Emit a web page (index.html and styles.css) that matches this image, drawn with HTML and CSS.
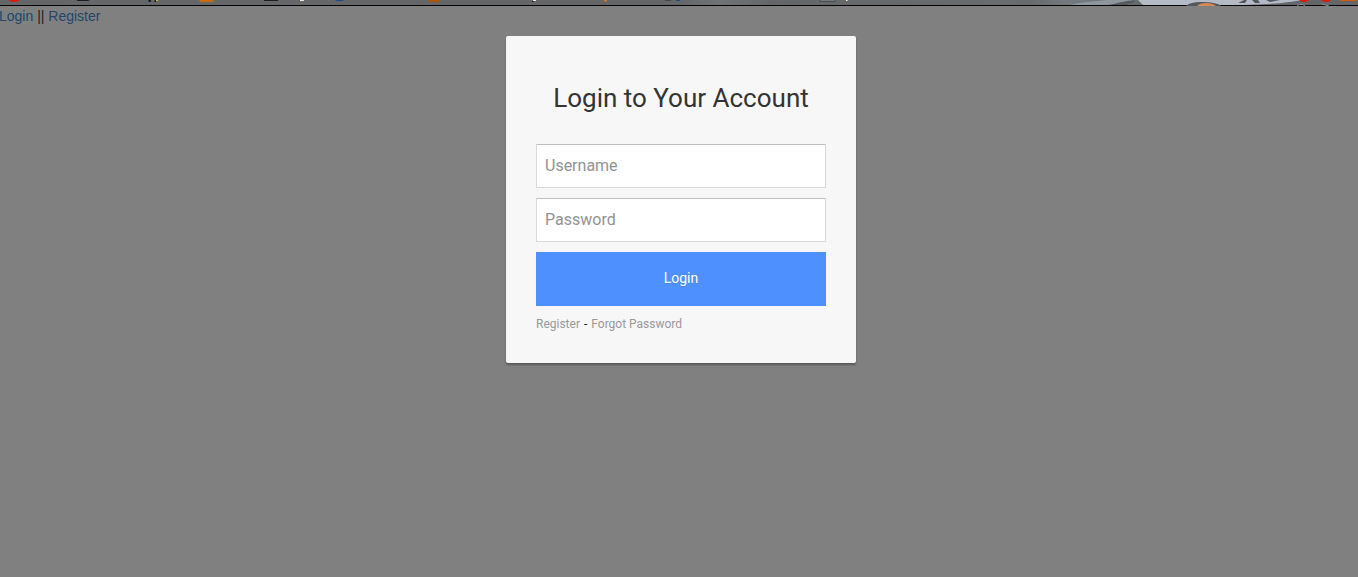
FILE: index.html
```html
<!DOCTYPE html>
<html lang="en">
<head>
<meta charset="utf-8">
<title>Login</title>
<link rel="stylesheet" href="styles.css">
</head>
<body>
<svg class="top-strip" viewBox="0 0 1358 6" preserveAspectRatio="none" aria-hidden="true">
  <defs>
    <linearGradient id="metal" x1="0" x2="1">
      <stop offset="0" stop-color="#646668"/>
      <stop offset=".5" stop-color="#646668"/>
      <stop offset=".53" stop-color="#707375"/>
      <stop offset=".57" stop-color="#646668"/>
      <stop offset=".76" stop-color="#686b6e"/>
      <stop offset=".79" stop-color="#747b80"/>
      <stop offset=".84" stop-color="#646a6c"/>
      <stop offset="1" stop-color="#646668"/>
    </linearGradient>
    <pattern id="grain" width="4" height="4" patternUnits="userSpaceOnUse">
      <path d="M0 0h1v1H0zM2 2h1v1H2z" fill="#727476"/>
    </pattern>
  </defs>
  <rect width="1358" height="6" fill="url(#metal)"/>
  <rect x="70" width="345" height="5" fill="url(#grain)" opacity=".5"/>
  <rect x="905" width="110" height="5" fill="url(#grain)" opacity=".5"/>
  <path d="M1070 5c12-3 25-4 38-5h27l-7 5z" fill="#8f969e"/>
  <path d="M1108 5c15-3 18-4 26-5l1 2-8 3z" fill="#555b60"/>
  <path d="M1138 0h100l-6 3h-11l5 2h-83z" fill="#b4bbc6"/>
  <path d="M1222 0h80c-20 4-45 5-80 5z" fill="#b4bbc6"/>
  <path d="M1238 3l6-3h3l-2 3zM1252 0h6l2 3h-5zM1266 0h14l-10 2z" fill="#53575a"/>
  <rect y="5" width="1358" height="1" fill="#000"/>
  <path d="M1186 6c3-3 8-4 16-4s16 1 19 4z" fill="#54585b"/>
  <path d="M1197 6c3-4 15-4 19 0z" fill="#d78856"/>
  <ellipse cx="14" cy="-2" rx="6" ry="4" fill="#e01505"/>
  <path d="M76 0h14l-2 1H78zM264 0h14v1h-14z" fill="#1c1d20"/>
  <path d="M148 0h3v2h-2zM155 0h1v2h-2z" fill="#1c1d20"/><path d="M156 0h2v1h-2z" fill="#d6b743"/>
  <path d="M200 0h13l1 2h-15z" fill="#c66e0d"/>
  <path d="M300 0h4v1h-4zM533 0h3v1h-3z" fill="#f2e9da"/><path d="M532 1h2v1h-2z" fill="#222"/>
  <path d="M335 0h9l-2 1h-5zM676 0h4v1h-4z" fill="#164994"/>
  <path d="M428 0h12v1l-1 1h-10l-1-1z" fill="#a65500"/>
  <path d="M604 0h3v1h-1v1h-1V1h-1z" fill="#e27a25"/>
  <path d="M664 0h8l-2 1h-4z" fill="#424447"/>
  <path d="M820 0v1.500h15V0" fill="#74777a" stroke="#494b4d"/>
  <path d="M846 0h2v1h-2z" fill="#fff"/><path d="M847 0h1v1h-1z" fill="#d3b449"/>
  <ellipse cx="1304" cy="-1" rx="5" ry="3" fill="#df1608"/>
  <ellipse cx="1326" cy="-1" rx="5" ry="3" fill="#df1608"/>
  <path d="M1340 0h16v1h-16z" fill="#d35a08"/>
  <path d="M1297 6c1-2 7-2 8 0M1322 4l7 2" fill="none" stroke="#92969a"/>
</svg>
<nav class="site-nav">
  <a href="#login">Login</a> || <a href="#register">Register</a>
</nav>
<main class="page">
  <section class="card" id="login">
    <h1 class="card-title">Login to Your Account</h1>
    <form class="login-form">
      <input class="field" type="text" name="user" placeholder="Username" aria-label="Username">
      <input class="field" type="password" name="pass" placeholder="Password" aria-label="Password">
      <button class="submit" type="submit">Login</button>
    </form>
    <div class="help"><a href="#register">Register</a><span>-</span><a href="#forgot">Forgot Password</a></div>
  </section>
</main>
</body>
</html>
```
FILE: styles.css
```css
* {
  box-sizing: border-box;
}

body {
  margin: 0;
  background: #808080;
  color: #222;
  font: 14px/20px "Liberation Sans", Arial, sans-serif;
}

a {
  text-decoration: none;
}

.top-strip {
  display: block;
  width: 100%;
  height: 6px;
}

.site-nav {
  margin-left: -1px;
}

.site-nav a {
  color: #23466a;
}

.page {
  display: flex;
  justify-content: center;
  padding: 10px 0 10px 4px;
}

.card {
  width: 100%;
  max-width: 350px;
  padding: 30px;
  border-radius: 2px;
  background: #f7f7f7;
  box-shadow: 0 2px 2px rgba(0, 0, 0, 0.3);
  font-family: Roboto, sans-serif;
}

.card-title {
  margin: 15px 0 29px;
  color: #333;
  font-size: 26px;
  font-weight: 400;
  line-height: 34px;
  text-align: center;
  white-space: nowrap;
}

.login-form {
  display: flex;
  flex-direction: column;
  gap: 10px;
}

.field {
  width: 100%;
  height: 44px;
  padding: 0 8px 2px;
  border: 1px solid #d9d9d9;
  border-top-color: #c0c0c0;
  border-radius: 0;
  background: #fff;
  color: #333;
  font: 16px/20px Roboto, sans-serif;
}

.field::placeholder {
  color: #929292;
}

.submit {
  height: 54px;
  padding: 0 0 2px;
  border: 0;
  background: #4d90fe;
  color: #fff;
  font: 14px/20px Roboto, sans-serif;
  text-shadow: 0 1px rgba(0, 0, 0, 0.1);
}

.help {
  display: flex;
  gap: 4px;
  margin-top: 10px;
  font-size: 12px;
  line-height: 17px;
}

.help a {
  color: #999;
}
```
